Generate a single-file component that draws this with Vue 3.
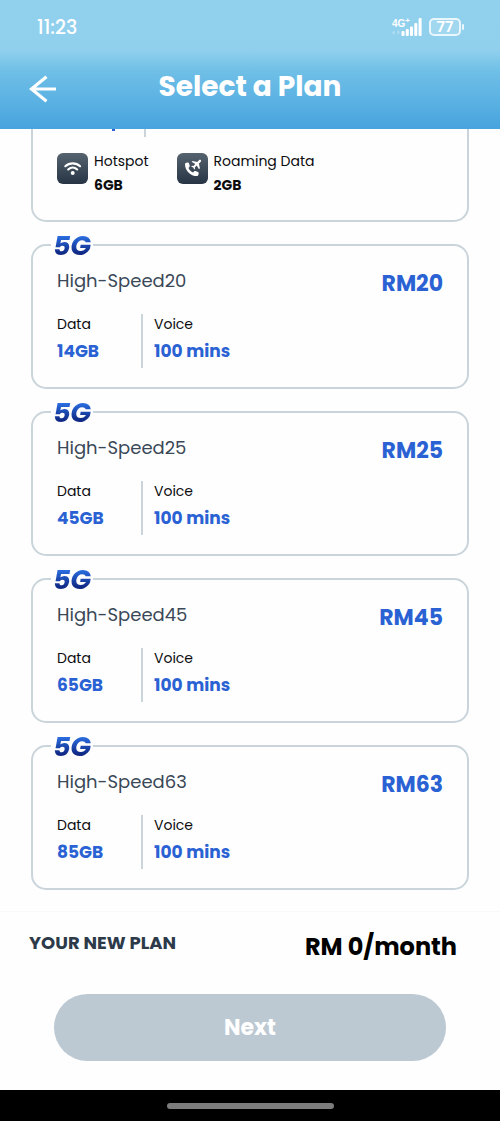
<script setup>
const plans = [
  { name: 'High-Speed20', price: 'RM20', data: '14GB', voice: '100 mins' },
  { name: 'High-Speed25', price: 'RM25', data: '45GB', voice: '100 mins' },
  { name: 'High-Speed45', price: 'RM45', data: '65GB', voice: '100 mins' },
  { name: 'High-Speed63', price: 'RM63', data: '85GB', voice: '100 mins' },
]
</script>

<template>
  <div class="screen">
    <header class="top">
      <div class="status">
        <span class="clock">11:23</span>
        <div class="indicators">
          <div class="network">
            <span class="net-label">4G<sup>+</sup></span>
            <svg class="updown" width="8" height="5" viewBox="0 0 8 5" aria-hidden="true">
              <path d="M0 3 2.500 0v5zM8 2 5.500 5V0z" fill="#fff" opacity=".3" />
            </svg>
          </div>
          <svg class="bars" width="21" height="18" viewBox="0 0 21 18" aria-hidden="true">
            <g fill="#fff">
              <rect x="0.5" y="13" width="3" height="5" rx="1" />
              <rect x="4.8" y="11" width="3" height="7" rx="1" />
              <rect x="9" y="8.5" width="3" height="9.5" rx="1" />
              <rect x="13.3" y="5" width="3" height="13" rx="1" />
              <rect x="17.6" y="0" width="3" height="18" rx="1" />
            </g>
          </svg>
          <div class="battery"><span>77</span></div>
          <i class="battery-tip"></i>
        </div>
      </div>
      <div class="title-bar">
        <button class="back" type="button" aria-label="Back">
          <svg width="28" height="28" viewBox="0 0 28 28" aria-hidden="true">
            <path d="M27 14H3M17.500 1.800 2.500 14l15 12.200" fill="none" stroke="#fff" stroke-width="3.200" />
          </svg>
        </button>
        <h1>Select a Plan</h1>
      </div>
    </header>

    <main class="list">
      <section class="card card-cut">
        <div class="cut-row"><i class="cut-mark"></i><i class="cut-line"></i></div>
        <div class="extras">
          <div class="extra">
            <svg class="tile" width="31" height="31" viewBox="0 0 31 31" aria-hidden="true">
              <defs>
                <linearGradient id="tile-a" x1="0" y1="0" x2="0" y2="1">
                  <stop offset="0" stop-color="#56636f" />
                  <stop offset="1" stop-color="#263444" />
                </linearGradient>
              </defs>
              <rect width="31" height="31" rx="6" fill="url(#tile-a)" />
              <g fill="none" stroke="#fff" stroke-width="2.100" stroke-linecap="round">
                <path d="M8.300 13.200c4.100-3.800 10.700-3.800 14.800 0" />
                <path d="M11.200 16.500c2.700-2.500 6.300-2.500 9 0" />
              </g>
              <circle cx="15.700" cy="20" r="2" fill="#fff" />
            </svg>
            <div>
              <div class="extra-label">Hotspot</div>
              <div class="extra-value">6GB</div>
            </div>
          </div>
          <div class="extra">
            <svg class="tile" width="31" height="31" viewBox="0 0 31 31" aria-hidden="true">
              <rect width="31" height="31" rx="6" fill="url(#tile-a)" />
              <path
                d="M9.200 9.800 10.500 9.400c.6-.1 1.100.1 1.300.7l.9 2.500c.2.600.1 1-.4 1.500l-.8.800c.9 2.100 2.500 3.700 4.600 4.600l.9-1c.4-.5.900-.6 1.500-.4l2.500 1c.6.300.8.700.7 1.300l-.4 1.700c-.2.600-.6 1-1.200 1C13.300 23.100 8 17.600 8 11.200c0-.7.500-1.200 1.200-1.400z"
                fill="#fff"
              />
              <path
                d="M23.900 7.200c.4.400.2 1.100-.4 1.700l-1.600 1.600 1 4.800-.9.900-2.300-3.700-1.900 1.900.2 1.500-.7.700-1.100-2-2-1.100.7-.7 1.500.2 1.900-1.900-3.700-2.300.9-.9 4.800 1 1.600-1.600c.6-.6 1.600-.6 2-.1z"
                fill="#fff"
              />
            </svg>
            <div>
              <div class="extra-label">Roaming Data</div>
              <div class="extra-value">2GB</div>
            </div>
          </div>
        </div>
      </section>

      <section v-for="plan in plans" :key="plan.name" class="card">
        <div class="badge"><span>5G</span></div>
        <div class="heading">
          <h2>{{ plan.name }}</h2>
          <strong class="price">{{ plan.price }}</strong>
        </div>
        <dl class="quota">
          <div class="data">
            <dt>Data</dt>
            <dd>{{ plan.data }}</dd>
          </div>
          <div class="voice">
            <dt>Voice</dt>
            <dd>{{ plan.voice }}</dd>
          </div>
        </dl>
      </section>
    </main>

    <footer class="summary">
      <div class="total">
        <span class="total-label">YOUR NEW PLAN</span>
        <strong class="total-value">RM 0/month</strong>
      </div>
      <button class="next" type="button">Next</button>
    </footer>
    <div class="system-nav"><i></i></div>
  </div>
</template>

<style>
body {
  margin: 0;
  background: #fefefe;
}
</style>

<style scoped>
* {
  box-sizing: border-box;
}
.screen {
  display: flex;
  flex-direction: column;
  height: 100vh;
  background: #fefefe;
  color: #0c0c0e;
  font-family: Poppins, Inter, "Open Sans", sans-serif;
}
.top {
  flex: none;
  height: 129px;
  background: linear-gradient(#92d1ee 0, #91d0ed 50px, #70c0e7 70px, #48a4de 128px);
  color: #fff;
}
.status {
  display: flex;
  justify-content: space-between;
  align-items: center;
  height: 54px;
  padding: 0 36px 0 37px;
}
.clock {
  padding-top: 2px;
  font-size: 19px;
  line-height: 24px;
  font-weight: 500;
}
.indicators {
  display: flex;
  align-items: center;
}
.network {
  display: flex;
  flex-direction: column;
  height: 18px;
  width: 9px;
}
.net-label {
  font: 700 10px/11px "Liberation Sans", sans-serif;
  white-space: nowrap;
}
.net-label sup {
  font-size: 8px;
  line-height: 1px;
}
.updown {
  margin-top: 1px;
}
.battery {
  display: grid;
  place-items: center;
  width: 32px;
  height: 18px;
  margin-left: 7px;
  border: 2px solid #e9f6fc;
  border-radius: 5px;
  background: rgba(255, 255, 255, 0.15);
  font: 700 15px/14px Roboto, sans-serif;
}
.battery-tip {
  width: 2px;
  height: 6px;
  margin-left: 1px;
  border-radius: 1px;
  background: #e9f6fc;
}
.title-bar {
  display: grid;
  grid-template-columns: 28px 1fr 28px;
  align-items: center;
  height: 66px;
  padding: 0 29px;
}
.back {
  display: block;
  height: 28px;
  margin-top: 4px;
  padding: 0;
  border: 0;
  background: none;
}
.back svg {
  display: block;
}
h1 {
  margin: 0;
  font-size: 28px;
  line-height: 40px;
  font-weight: 700;
  text-align: center;
}
.list {
  display: flex;
  flex: 1;
  flex-direction: column;
  justify-content: flex-end;
  gap: 22px;
  min-height: 0;
  padding: 0 31px 21px;
  overflow: hidden;
}
.card {
  position: relative;
  flex: none;
  height: 145px;
  padding: 21px 24px 0;
  border: 2px solid #cad5db;
  border-radius: 15px;
}
.card-cut {
  height: 94px;
  padding-top: 0;
  border-top: 0;
  border-radius: 0 0 15px 15px;
}
.cut-row {
  display: flex;
  align-items: flex-start;
  gap: 29px;
  height: 24px;
  padding-left: 55px;
}
.cut-mark {
  width: 3px;
  height: 3px;
  background: #2a62d4;
}
.cut-line {
  width: 2px;
  height: 9px;
  background: #cad5db;
}
.extras {
  display: flex;
  gap: 28px;
}
.extra {
  display: flex;
  gap: 6px;
}
.tile {
  flex: none;
  margin-top: 1px;
}
.extra-label {
  font-size: 14px;
  line-height: 18px;
}
.extra-value {
  margin-top: 6px;
  font-size: 14px;
  line-height: 18px;
  font-weight: 700;
}
.badge {
  position: absolute;
  top: -16px;
  left: 18px;
  padding: 0 2px;
  background: #fefefe;
  font-size: 27px;
  line-height: 32px;
  font-style: italic;
  font-weight: 700;
}
.badge span {
  background: linear-gradient(#2a6de0 25%, #102a86 70%);
  background-clip: text;
  color: transparent;
}
.heading {
  display: flex;
  justify-content: space-between;
}
h2 {
  margin: 0;
  color: #3a4857;
  font-size: 18px;
  line-height: 28px;
  font-weight: 400;
}
.price {
  color: #2a62d4;
  font-size: 22px;
  line-height: 34px;
  font-weight: 700;
}
.quota {
  display: flex;
  margin: 13px 0 0;
}
.data {
  width: 84px;
}
.voice {
  padding-left: 11px;
  border-left: 2px solid #cad5db;
}
dt {
  font-size: 14px;
  line-height: 20px;
}
dd {
  margin: 4px 0 0;
  padding-bottom: 4px;
  color: #2a62d4;
  font-size: 17px;
  line-height: 26px;
  font-weight: 700;
}
.summary {
  flex: none;
  padding: 17px 54px 29px;
  border-top: 1px solid #f8f9fa;
}
.total {
  display: flex;
  justify-content: space-between;
  margin: 0 -11px 0 -25px;
}
.total-label {
  color: #2c3a4a;
  font-size: 18px;
  line-height: 28px;
  font-weight: 700;
}
.total-value {
  color: #000;
  font-size: 24px;
  line-height: 36px;
  font-weight: 700;
}
.next {
  display: block;
  width: 100%;
  height: 67px;
  margin-top: 29px;
  padding: 0;
  border: 0;
  border-radius: 34px;
  background: #bcc8d2;
  color: #fff;
  font: inherit;
  font-size: 22px;
  font-weight: 700;
}
.system-nav {
  display: flex;
  flex: none;
  justify-content: center;
  align-items: center;
  height: 31px;
  background: #000;
}
.system-nav i {
  width: 167px;
  height: 6px;
  border-radius: 3px;
  background: #7c7c7c;
}
</style>
